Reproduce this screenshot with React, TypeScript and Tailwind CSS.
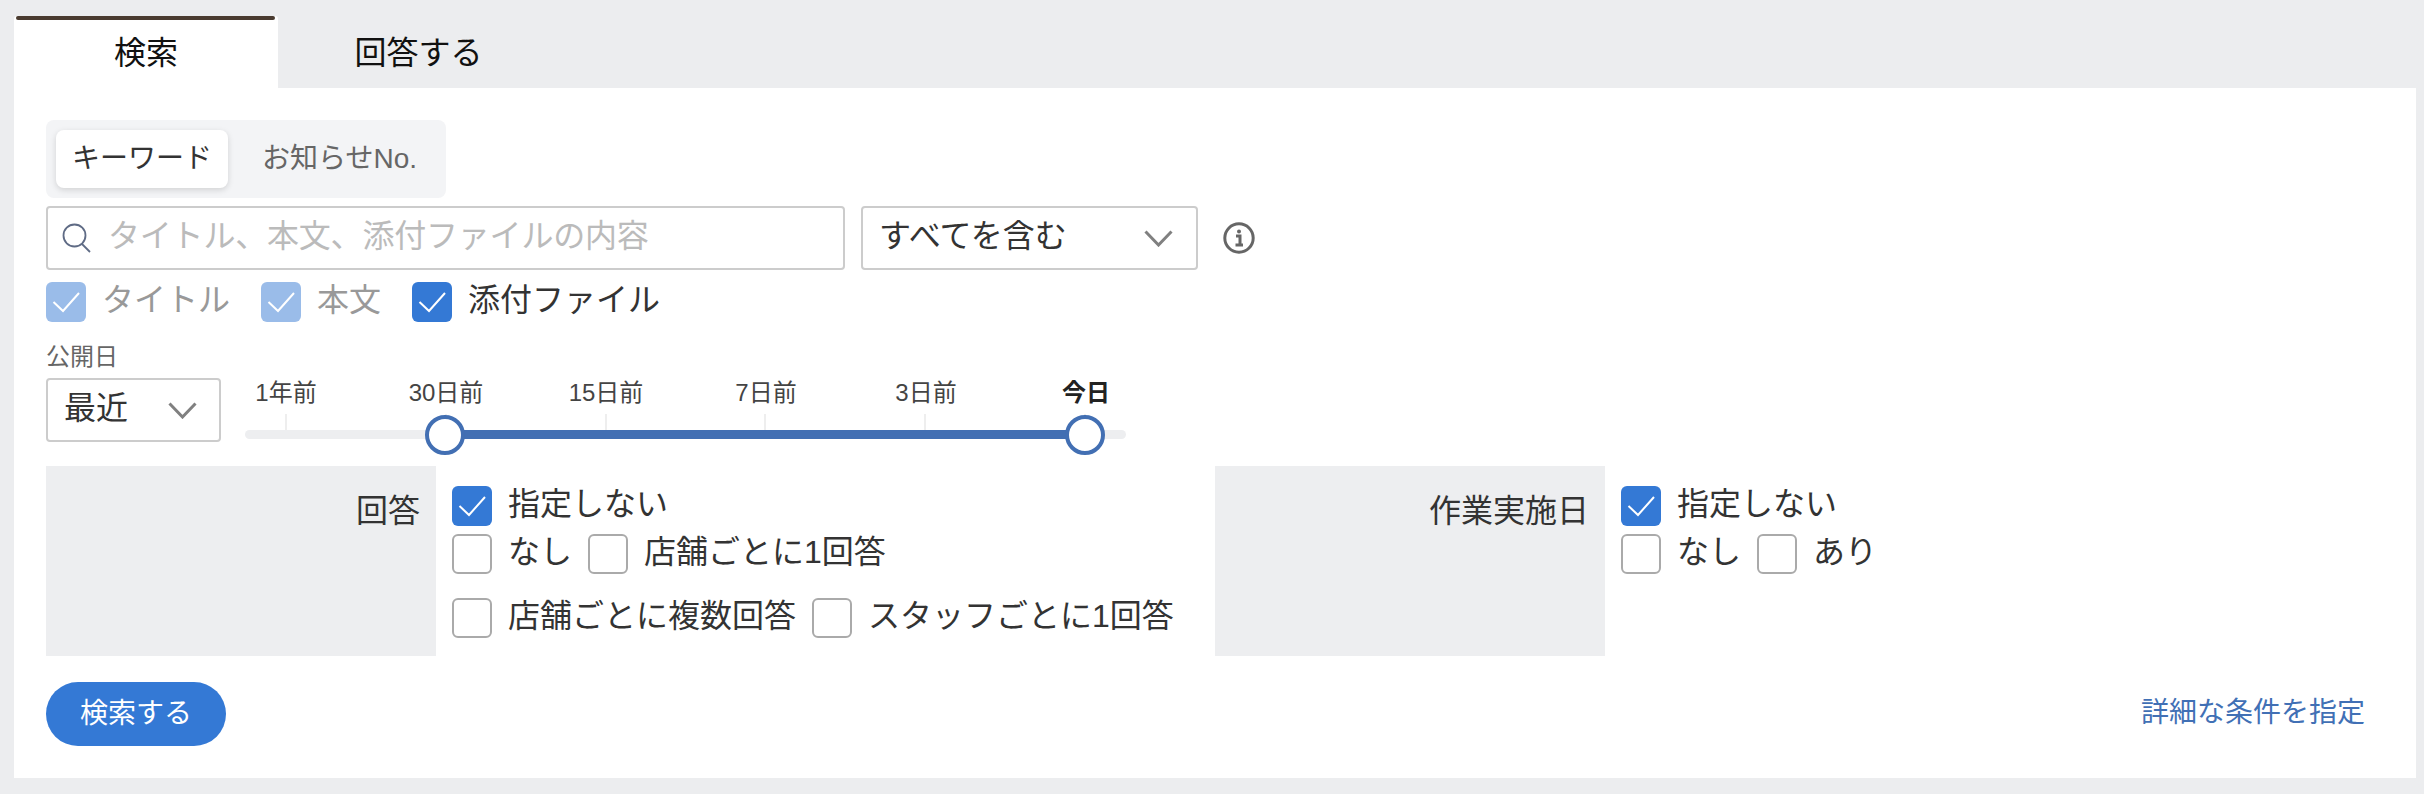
const FONT = "font-['Liberation_Sans','Noto_Sans_CJK_JP',sans-serif]";

const Chevron = ({ className }: { className: string }) => (
  <svg viewBox="0 0 29 17" className={className} fill="none" stroke="#808080" strokeWidth="3">
    <path d="M1.5 1.5 L14.5 15 L27.5 1.5" />
  </svg>
);

const CheckItem = ({ label, state }: { label: string; state: 'off' | 'on' | 'faded' }) => {
  const boxClass =
    state === 'on'
      ? 'bg-[#3479d5]'
      : state === 'faded'
        ? 'bg-[#9abce9]'
        : 'bg-white border-2 border-[#aaaaaa]';
  return (
    <label className="flex items-center h-10">
      <span className={`w-10 h-10 rounded-[6px] shrink-0 ${boxClass}`}>
        {state !== 'off' && (
          <svg viewBox="0 0 40 40" className="w-10 h-10" fill="none" stroke="#ffffff" strokeWidth="2">
            <path d="M7.5 20 L17 29 L33 11" />
          </svg>
        )}
      </span>
      <span className={`ml-4 text-[32px] leading-10 -mt-1 whitespace-nowrap ${state === 'faded' ? 'text-[#999999]' : 'text-[#333333]'}`}>
        {label}
      </span>
    </label>
  );
};

const ticks = ['1年前', '30日前', '15日前', '7日前', '3日前', '今日'];

const RangeSlider = () => (
  <div className="ml-[24px] w-[881px]">
    <div className="flex justify-between pl-[41px] pr-[40px] h-9">
      {ticks.map((t) => (
        <div key={t} className="w-0 flex flex-col items-center">
          <span className={`text-[24px] leading-[30px] whitespace-nowrap ${t === '今日' ? 'font-bold text-[#222222]' : 'text-[#444444]'}`}>{t}</span>
        </div>
      ))}
    </div>
    <div className="flex justify-between pl-[40px] pr-[40px] h-4">
      {ticks.map((t) => (
        <div key={t} className="w-0.5 h-4 bg-[#eeeeee]" />
      ))}
    </div>
    <div className="relative h-[9px] rounded-full bg-[#edeef0]">
      <div className="absolute left-[199px] right-[41px] top-0 h-[9px] bg-[#426fb3]" />
      <div className="absolute left-[180px] -top-[15px] w-10 h-10 rounded-full bg-white border-[4px] border-[#426fb3]" />
      <div className="absolute left-[820px] -top-[15px] w-10 h-10 rounded-full bg-white border-[4px] border-[#426fb3]" />
    </div>
  </div>
);

export default function App() {
  return (
    <div className={`h-[794px] bg-[#ecedef] pt-4 pl-[14px] pr-2 ${FONT}`}>
      <div className="flex h-[72px] text-[32px] text-[#111111]">
        <div className="relative w-[264px] bg-white flex items-center justify-center rounded-t-[3px]">
          <div className="absolute left-[2px] right-[3px] top-0 h-[4px] rounded-full bg-[#4a3b30]" />
          <span className="mt-[2px]">検索</span>
        </div>
        <div className="w-[281px] flex items-center justify-center">
          <span className="mt-[2px]">回答する</span>
        </div>
      </div>

      <div className="h-[690px] bg-white px-8 pt-8">
        <div className="flex items-center gap-[17px] w-[400px] h-[78px] p-[10px] rounded-[8px] bg-[#f3f4f6]">
          <div className="w-[172px] h-[58px] pb-[1px] flex items-center justify-center rounded-[8px] bg-white shadow-[0_2px_6px_rgba(0,0,0,0.14)] text-[28px] text-[#333333]">
            キーワード
          </div>
          <div className="ml-[17px] -mt-[1px] text-[28px] text-[#666666]">お知らせNo.</div>
        </div>

        <div className="flex items-center mt-2">
          <div className="flex items-center w-[799px] h-[64px] rounded-[4px] border-2 border-[#cccccc] pl-[14px]">
            <svg viewBox="0 0 29 30" className="w-[29px] h-[30px] shrink-0" fill="none" stroke="#5f6b85" strokeWidth="1.8">
              <circle cx="12.5" cy="12.5" r="11" />
              <path d="M20 21 L28 29" />
            </svg>
            <input
              readOnly
              placeholder="タイトル、本文、添付ファイルの内容"
              className="ml-[17px] flex-1 text-[32px] leading-10 -mt-1 tracking-[-0.2px] outline-none placeholder:text-[#bbbbbb]"
            />
          </div>
          <div className="flex items-center justify-between w-[337px] h-[64px] ml-4 rounded-[4px] border-2 border-[#cccccc] pl-[16px] pr-[23px]">
            <span className="text-[32px] text-[#333333] -mt-1">すべてを含む</span>
            <Chevron className="w-[29px] h-[17px]" />
          </div>
          <svg viewBox="0 0 32 32" className="w-8 h-8 ml-[25px]" fill="none">
            <circle cx="16" cy="16" r="14.2" stroke="#666666" strokeWidth="3" />
            <circle cx="16" cy="9.5" r="2" fill="#666666" />
            <path d="M13 14 H17 V22 M12.5 23 H20" stroke="#666666" strokeWidth="3" />
          </svg>
        </div>

        <div className="flex gap-[31px] mt-3">
          <CheckItem label="タイトル" state="faded" />
          <CheckItem label="本文" state="faded" />
          <CheckItem label="添付ファイル" state="on" />
        </div>

        <div className="mt-[23px] text-[24px] leading-6 text-[#666666]">公開日</div>
        <div className="flex mt-[9px]">
          <div className="flex items-center justify-between w-[175px] h-[64px] rounded-[4px] border-2 border-[#cccccc] pl-4 pr-[22px]">
            <span className="text-[32px] text-[#333333] -mt-1">最近</span>
            <Chevron className="w-[29px] h-[17px]" />
          </div>
          <RangeSlider />
        </div>

        <div className="flex mt-6">
          <div className="flex w-[1169px] h-[190px]">
            <div className="w-[390px] bg-[#edeef0] pr-4 pt-[25px] text-right text-[32px] leading-10 text-[#333333]">回答</div>
            <div className="pl-4 pt-5">
              <CheckItem label="指定しない" state="on" />
              <div className="flex gap-4 mt-2">
                <CheckItem label="なし" state="off" />
                <CheckItem label="店舗ごとに1回答" state="off" />
              </div>
              <div className="flex gap-4 mt-6">
                <CheckItem label="店舗ごとに複数回答" state="off" />
                <CheckItem label="スタッフごとに1回答" state="off" />
              </div>
            </div>
          </div>
          <div className="flex h-[190px]">
            <div className="w-[390px] bg-[#edeef0] pr-4 pt-[25px] text-right text-[32px] leading-10 text-[#333333]">作業実施日</div>
            <div className="pl-4 pt-5">
              <CheckItem label="指定しない" state="on" />
              <div className="flex gap-4 mt-2">
                <CheckItem label="なし" state="off" />
                <CheckItem label="あり" state="off" />
              </div>
            </div>
          </div>
        </div>

        <div className="flex items-center justify-between mt-[26px] pr-[19px]">
          <button className="w-[180px] h-[64px] pb-[1px] rounded-full bg-[#3479d5] text-white text-[28px]">検索する</button>
          <a className="text-[28px] text-[#4170b5] -mt-[2px]">詳細な条件を指定</a>
        </div>
      </div>
    </div>
  );
}
